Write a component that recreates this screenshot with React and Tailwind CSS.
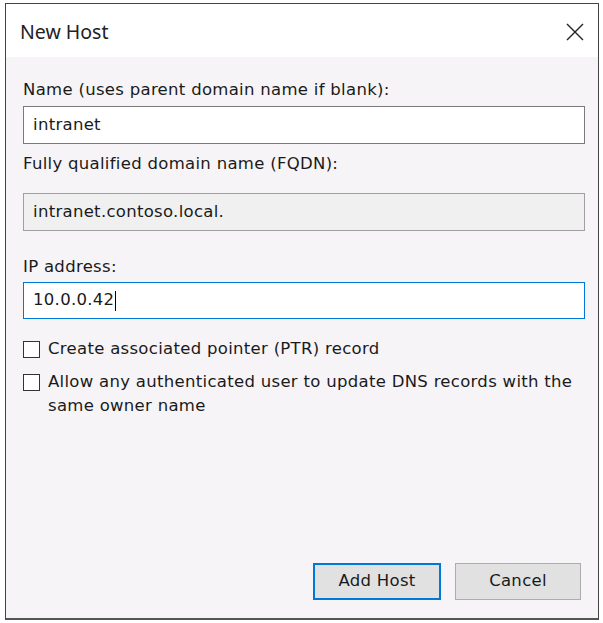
import React from 'react'

const font = { fontFamily: '"DejaVu Sans", Verdana, sans-serif', letterSpacing: '0.3px' }

function Field({ label, value, disabled, focused, gap, height }) {
  return (
    <div className="flex flex-col">
      <label className="text-[16.5px] leading-[20px] text-[#1a1a1a]" style={{ marginBottom: gap }}>
        {label}
      </label>
      <div
        className={
          'flex items-center px-[9px] text-[16.5px] text-[#1a1a1a] ' +
          (focused
            ? 'border border-[#0078d7] bg-white'
            : disabled
              ? 'border border-[#a0a0a0] bg-[#f0f0f0]'
              : 'border border-[#7a7a7a] bg-white')
        }
        style={{ height }}
      >
        {value}
        {focused && <span className="inline-block w-px h-[20px] bg-black ml-px" />}
      </div>
    </div>
  )
}

function Check({ children }) {
  return (
    <div className="flex items-start gap-[8px]">
      <div className="w-[17px] h-[17px] border border-[#333] bg-white shrink-0" />
      <div className="text-[16.5px] leading-[24px] -mt-[4px] text-[#1a1a1a]">{children}</div>
    </div>
  )
}

export default function App() {
  return (
    <div className="w-[603px] h-[623px] bg-white pt-[3px] pl-[5px] pr-[4px] pb-[3px]" style={font}>
      <div className="w-full h-full border border-[#444] border-b-2 border-b-[#555] flex flex-col">

        <div className="h-[53px] bg-white flex items-center justify-between pl-[14px] pr-[13px] shrink-0">
          <div className="text-[19.5px] text-[#222] mt-[2px] tracking-normal" style={{ fontFamily: '"Noto Sans", "Open Sans", sans-serif' }}>
            New Host
          </div>
          <svg width="20" height="20" viewBox="0 0 20 20" className="mt-[3px]">
            <path d="M2 2 L18 18 M18 2 L2 18" stroke="#222" strokeWidth="1.4" />
          </svg>
        </div>

        <div className="flex-1 bg-[#f6f4f7] pl-[17px] pr-[13px] pt-[23px] pb-[18px] flex flex-col">

          <Field label="Name (uses parent domain name if blank):" value="intranet" gap={6} height={38} />

          <div className="mt-[10px]">
            <Field label="Fully qualified domain name (FQDN):" value="intranet.contoso.local." disabled gap={19} height={38} />
          </div>

          <div className="mt-[26px]">
            <Field label="IP address:" value="10.0.0.42" focused gap={5} height={37} />
          </div>

          <div className="mt-[22px] flex flex-col gap-[13px]">
            <Check>Create associated pointer (PTR) record</Check>
            <Check>
              Allow any authenticated user to update DNS records with the
              <br />
              same owner name
            </Check>
          </div>

          <div className="mt-auto flex justify-end gap-[14px] pr-[4px]">
            <button className="w-[128px] h-[37px] bg-[#e1e1e1] border-2 border-[#0078d7] text-[16.5px] text-[#1a1a1a]">
              Add Host
            </button>
            <button className="w-[126px] h-[37px] bg-[#e1e1e1] border border-[#adadad] text-[16.5px] text-[#1a1a1a]">
              Cancel
            </button>
          </div>
        </div>
      </div>
    </div>
  )
}
